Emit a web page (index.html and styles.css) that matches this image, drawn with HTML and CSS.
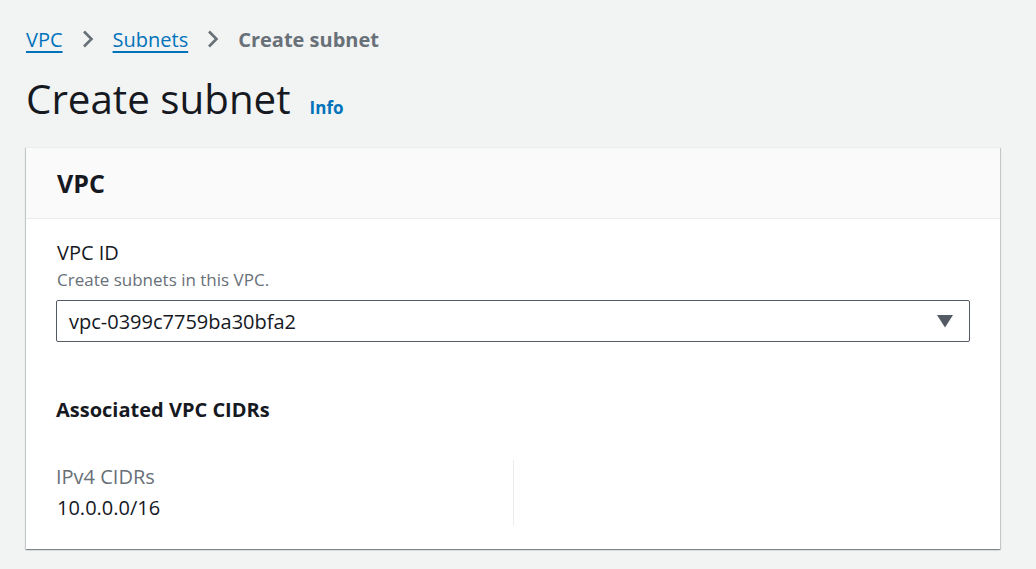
FILE: index.html
```html
<!DOCTYPE html>
<html lang="en">
<head>
<meta charset="utf-8">
<title>Create subnet</title>
<link rel="stylesheet" href="styles.css">
</head>
<body>
<div class="page">
  <nav class="breadcrumbs">
    <a href="#" class="crumb-link">VPC</a>
    <svg class="chev" width="12" height="18" viewBox="0 0 12 18"><path d="M2 1.5 L9.5 9 L2 16.5" fill="none" stroke="#687078" stroke-width="2.6"/></svg>
    <a href="#" class="crumb-link">Subnets</a>
    <svg class="chev" width="12" height="18" viewBox="0 0 12 18"><path d="M2 1.5 L9.5 9 L2 16.5" fill="none" stroke="#687078" stroke-width="2.6"/></svg>
    <span class="crumb-current">Create subnet</span>
  </nav>
  <div class="title-row">
    <h1 class="title">Create subnet</h1>
    <a href="#" class="info">Info</a>
  </div>
  <section class="card">
    <header class="card-header"><h2 class="card-title">VPC</h2></header>
    <div class="card-body">
      <div class="field">
        <div class="label">VPC ID</div>
        <div class="desc">Create subnets in this VPC.</div>
        <div class="select">
          <span class="select-value">vpc-0399c7759ba30bfa2</span>
          <svg class="caret" width="16" height="13" viewBox="0 0 16 13"><path d="M0 0 H16 L8 12.5 Z" fill="#545b64"/></svg>
        </div>
      </div>
      <h3 class="sub-title">Associated VPC CIDRs</h3>
      <div class="columns">
        <div class="col">
          <div class="kv-key">IPv4 CIDRs</div>
          <div class="kv-val">10.0.0.0/16</div>
        </div>
        <div class="col col-right"></div>
      </div>
    </div>
  </section>
</div>
</body>
</html>
```
FILE: styles.css
```css
* { box-sizing: border-box; }
html, body { margin: 0; padding: 0; }
body {
  background: #f2f3f3;
  font-family: "Open Sans", "Noto Sans", sans-serif;
  color: #16191f;
  width: 1036px;
  height: 569px;
  overflow: hidden;
}
.page { padding: 24px 36px 0 26px; }
.breadcrumbs {
  display: flex;
  align-items: center;
  height: 30px;
  font-size: 20px;
}
.crumb-link {
  color: #0073bb;
  text-decoration: underline;
  text-underline-offset: 4px;
  text-decoration-thickness: 2px;
}
.chev { margin: 0 19px 0 19px; }
.crumb-current { color: #687078; font-weight: 700; }
.title-row {
  display: flex;
  align-items: baseline;
  margin-top: 14px;
  height: 62px;
}
.title {
  margin: 0;
  font-size: 40.3px;
  font-weight: 400;
  line-height: 62px;
  color: #16191f;
}
.info {
  margin-left: 19px;
  color: #0073bb;
  font-weight: 700;
  font-size: 17px;
  text-decoration: none;
}
.card {
  margin-top: 17px;
  background: #fff;
  width: 974px;
  height: 402px;
  box-shadow: 0 1px 1px 0 rgba(0,28,36,.3), 1px 1px 1px 0 rgba(0,28,36,.15), -1px 1px 1px 0 rgba(0,28,36,.15);
  border-top: 1px solid #eaeded;
}
.card-header {
  background: #fafafa;
  height: 71px;
  border-bottom: 1px solid #eaeded;
  display: flex;
  align-items: center;
  padding-left: 31px;
}
.card-title {
  margin: 0;
  font-size: 25px;
  font-weight: 700;
}
.card-body { padding: 20px 30px 0 30px; }
.label { font-size: 20px; line-height: 28px; margin-left: 1px; }
.desc { font-size: 17px; color: #687078; line-height: 24px; margin-top: 1px; margin-left: 1px; }
.select {
  margin-top: 8px;
  height: 42px;
  border: 1px solid #545b64;
  border-radius: 2px;
  display: flex;
  align-items: center;
  justify-content: space-between;
  padding: 0 16px 0 12px;
}
.select-value { font-size: 20px; }
.sub-title {
  margin: 54px 0 0 0;
  font-size: 20px;
  font-weight: 700;
  line-height: 28px;
}
.columns {
  display: grid;
  grid-template-columns: 457px 1fr;
  margin-top: 36px;
}
.col { min-height: 66px; }
.col-right { border-left: 1px solid #eaeded; }
.kv-key { font-size: 20px; color: #687078; line-height: 28px; margin-top: 3px; }
.kv-val { font-size: 20px; line-height: 32px; margin-top: 1px; margin-left: 1px; }
```
